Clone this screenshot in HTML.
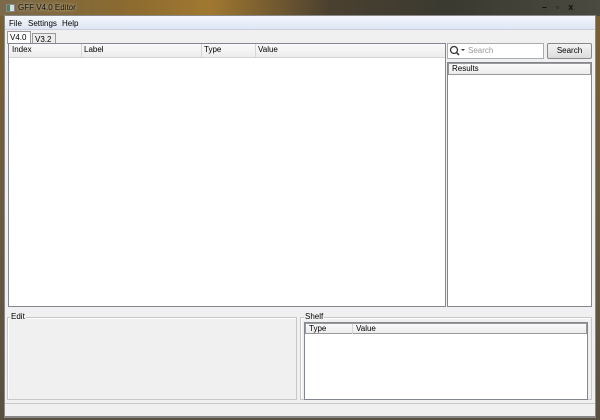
<!DOCTYPE html>
<html><head><style>
*{box-sizing:border-box;margin:0;padding:0}
body{width:600px;height:420px;overflow:hidden;font-family:"Liberation Sans",sans-serif;font-size:8px;color:#000;position:relative;background:#6a5a3a}
.a{position:absolute}
.title{left:0;top:0;width:600px;height:16px;background:linear-gradient(90deg,#7a6a4a 0%,#8a6a30 20%,#a07830 35%,#4a4030 55%,#3a3a30 75%,#4a4a40 100%)}
.frame{left:0;top:0;width:600px;height:420px;background:linear-gradient(180deg,#7a6030,#6a5a40 50%,#5a5040)}
.client{left:4px;top:15px;width:592px;height:403px;background:#f0f0f0;border:1px solid #888}
.menu{left:5px;top:16px;width:590px;height:14px;background:linear-gradient(#f4f7fc,#dde6f4);border-bottom:1px solid #ccd}
.box{background:#fff;border:1px solid #828790}
.hdr{background:linear-gradient(#fafafa,#ececec);border-bottom:1px solid #d5d5d5;height:14px}
.hc{position:absolute;top:1px;font-size:8px}
.sep{position:absolute;top:0;width:1px;height:14px;background:#d5d5d5}
</style></head><body>
<div class="a frame"></div>
<div class="a title"></div>
<div class="a" style="left:6px;top:4px;width:9px;height:8px;background:#ddd;border:1px solid #888"><div style="width:3px;height:6px;background:#3a8a5a"></div></div>
<div class="a" style="left:18px;top:3px;color:#111;font-size:8px;text-shadow:0 0 3px #e8e0c8">GFF V4.0 Editor</div>
<div class="a" style="left:542px;top:2px;color:#111;font-size:9px;font-weight:bold;letter-spacing:9px">–▫x</div>
<div class="a client"></div>
<div class="a menu"></div>
<div class="a" style="left:9px;top:19px">File</div>
<div class="a" style="left:28px;top:19px">Settings</div>
<div class="a" style="left:62px;top:19px">Help</div>
<div class="a" style="left:7px;top:31px;width:24px;height:13px;background:#fff;border:1px solid #999;border-bottom:none"></div>
<div class="a" style="left:10px;top:33px">V4.0</div>
<div class="a" style="left:32px;top:33px;width:24px;height:11px;background:#ececec;border:1px solid #999;border-bottom:none"></div>
<div class="a" style="left:35px;top:35px">V3.2</div>
<div class="a box" style="left:8px;top:43px;width:438px;height:264px">
 <div class="hdr" style="position:relative">
  <span class="hc" style="left:3px">Index</span><div class="sep" style="left:72px"></div>
  <span class="hc" style="left:75px">Label</span><div class="sep" style="left:192px"></div>
  <span class="hc" style="left:195px">Type</span><div class="sep" style="left:246px"></div>
  <span class="hc" style="left:249px">Value</span>
 </div>
</div>
<div class="a box" style="left:447px;top:43px;width:97px;height:16px;border-color:#abadb3"></div>
<svg class="a" style="left:449px;top:45px" width="16" height="11"><circle cx="5" cy="5" r="3.5" fill="none" stroke="#333" stroke-width="1.3"/><line x1="7.5" y1="7.5" x2="10" y2="10" stroke="#333" stroke-width="1.5"/><path d="M12 4h4l-2 2z" fill="#333"/></svg>
<div class="a" style="left:468px;top:46px;color:#999">Search</div>
<div class="a" style="left:547px;top:43px;width:45px;height:16px;border:1px solid #888;border-radius:2px;background:linear-gradient(#f4f4f4,#dcdcdc);text-align:center;line-height:14px">Search</div>
<div class="a box" style="left:447px;top:62px;width:145px;height:245px">
 <div class="hdr" style="height:12px;border:1px solid #999;position:relative"><span class="hc" style="left:3px;top:0">Results</span></div>
</div>
<div class="a" style="left:7px;top:317px;width:290px;height:83px;border:1px solid #c8c8c8;box-shadow:inset 1px 1px #fff"></div>
<div class="a" style="left:10px;top:312px;background:#f0f0f0;padding:0 1px">Edit</div>
<div class="a" style="left:300px;top:317px;width:292px;height:83px;border:1px solid #c8c8c8;box-shadow:inset 1px 1px #fff"></div>
<div class="a" style="left:304px;top:312px;background:#f0f0f0;padding:0 1px">Shelf</div>
<div class="a box" style="left:304px;top:322px;width:284px;height:78px">
 <div class="hdr" style="position:relative;height:11px;border:1px solid #999"><span class="hc" style="left:3px;top:0">Type</span><div class="sep" style="left:46px;height:10px"></div><span class="hc" style="left:50px;top:0">Value</span></div>
</div>
<div class="a" style="left:5px;top:403px;width:590px;height:1px;background:#c8c8c8"></div>
<div class="a" style="left:5px;top:416px;width:590px;height:2px;background:#888"></div>
</body></html>
